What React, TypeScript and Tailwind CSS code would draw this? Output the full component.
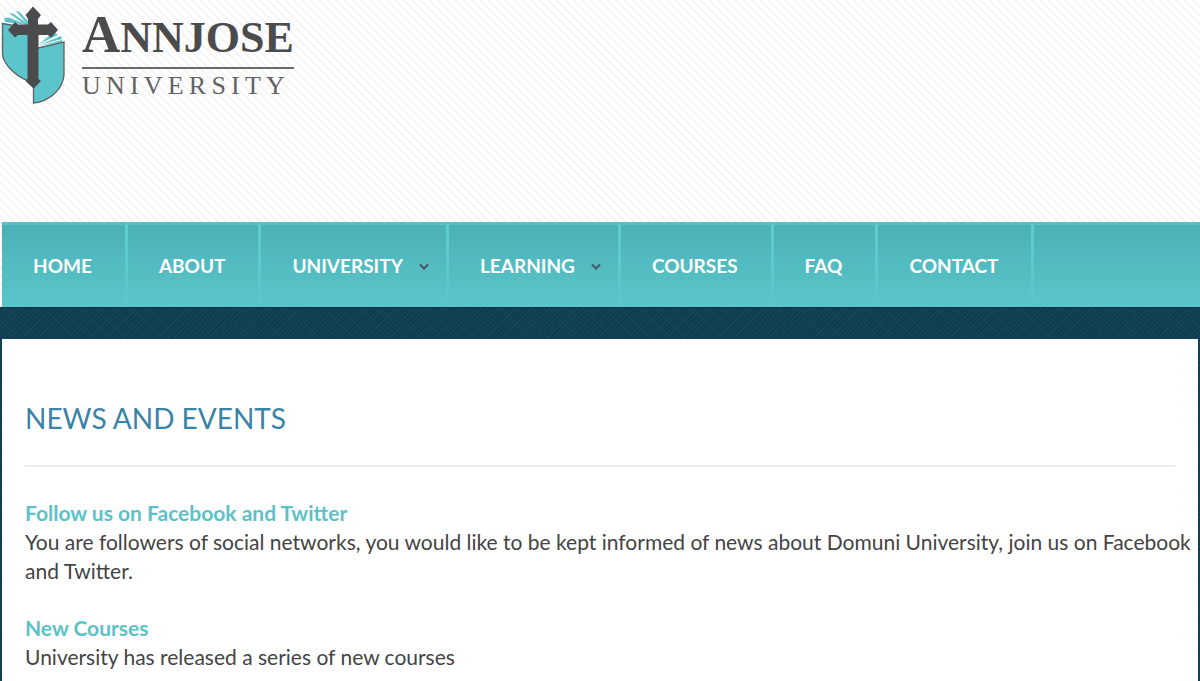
/**
 * News and Events page
 * Logo header, gradient main menu and the list of news items
 */

interface MenuItem {
  label: string;
  hasSubmenu?: boolean;
}

interface NewsItem {
  title: string;
  text: string;
}

const menuItems: MenuItem[] = [
  { label: 'Home' },
  { label: 'About' },
  { label: 'University', hasSubmenu: true },
  { label: 'Learning', hasSubmenu: true },
  { label: 'Courses' },
  { label: 'FAQ' },
  { label: 'Contact' },
];

const newsItems: NewsItem[] = [
  {
    title: 'Follow us on Facebook and Twitter',
    text: 'You are followers of social networks, you would like to be kept informed of news about Domuni University, join us on Facebook and Twitter.',
  },
  {
    title: 'New Courses',
    text: 'University has released a series of new courses',
  },
];

function LogoMark() {
  return (
    <svg width="66" height="106" viewBox="0 0 66 106" aria-hidden="true">
      {/* Loose pages */}
      <g fill="#5bc5cb">
        <path d="M16 11 L19 11.500 L28 21 V25 Z" />
        <path d="M9 13 L13 13.500 L28 24 V27 Z" />
        <path d="M4 18 L9 17.500 L27 25 L5 22 Z" />
        <path d="M39 44 L54 32 L58 35 Z" />
        <path d="M39 45 L61 36 L62 39 Z" />
        <path d="M39 46 L62 40 V42 Z" />
      </g>
      {/* Left and right halves of the shield */}
      <path d="M2.500 23.500 L28 28 V81 C12 74 2.500 62 2.500 53 Z" fill="#5bc5cb" stroke="#5a6265" strokeWidth="1.300" />
      <path d="M33.500 49 L64 42 V75 C63 90 48 102 33.500 103 Z" fill="#5bc5cb" stroke="#5a6265" strokeWidth="1.300" />
      {/* Cross */}
      <path
        d="M33 6.500 L41 15 L38 19 V24.500 H48 L51 22 L58 30 L51 37.500 L48 35 H38.500 V79 L41 81 L33.500 88.500 L25.500 81 L28 78 V35 H18 L15 37.500 L8 30 L15 22 L18 24.500 H28 V19 L25.500 15 Z"
        fill="#4b4b4d"
      />
    </svg>
  );
}

function Logo() {
  return (
    <a href="#" className="inline-flex items-start text-[#4b4b4d]" aria-label="Annjose University">
      <LogoMark />
      <span className="ml-4 flex flex-col pt-2 font-['Liberation_Serif',serif]">
        <span className="border-b-2 border-[#6a6a6c] pb-[3px] text-[44px] font-bold leading-[52px]">
          <span className="text-[53px]">A</span>NNJOSE
        </span>
        <span className="pt-[3px] text-[26px] leading-7 tracking-[0.2em] text-[#636365]">UNIVERSITY</span>
      </span>
    </a>
  );
}

function MainMenu() {
  return (
    <nav className="ml-0.5 border-t-[3px] border-[#57c3c8] bg-linear-to-b from-[#4bb1b7] to-[#5ac6cb]">
      <ul className="flex">
        {menuItems.map((item) => (
          <li key={item.label} className="flex">
            <a
              href="#"
              className="flex h-[82px] items-center pl-[31px] pr-[33px] text-[19px] font-bold uppercase text-white"
            >
              {item.label}
              {item.hasSubmenu && (
                <svg className="-mr-4 ml-4 mt-0.5" width="10" height="8" viewBox="0 0 10 8" aria-hidden="true">
                  <path d="M1 1.500 L5 5.500 L9 1.500" fill="none" stroke="#46565a" strokeWidth="2" />
                </svg>
              )}
            </a>
            <span className="w-[3px] bg-linear-to-b from-[#5ecdd2] to-[#5ac6cb]" />
          </li>
        ))}
      </ul>
    </nav>
  );
}

export default function App() {
  return (
    <div className="flex min-h-screen flex-col bg-[#0f3b50] font-['Lato',sans-serif]">
      {/* Header with diagonal hairlines */}
      <header className="bg-white bg-[repeating-linear-gradient(45deg,#ffffff_0px,#ffffff_3px,#f5f5f5_4px,#f5f5f5_5px,#ffffff_6px)]">
        <div className="h-[222px]">
          <Logo />
        </div>
        <MainMenu />
      </header>

      {/* Woven strip and page panel */}
      <div className="flex grow flex-col border-t border-[#08314a] bg-[#0f3b50] bg-[repeating-linear-gradient(45deg,#1d506360_0px,#1d506360_1px,transparent_1px,transparent_3px),repeating-linear-gradient(135deg,#1d506360_0px,#1d506360_1px,transparent_1px,transparent_4px)] px-0.5 pt-[31px]">
        <main className="grow bg-white px-[23px] pt-[59px]">
          <h1 className="border-b-2 border-[#eeeeee] pb-[27px] text-[28px] leading-10 text-[#3a83a8] uppercase">
            News and Events
          </h1>
          <div className="-mr-4 flex flex-col gap-7 pt-[31px] text-[21px] leading-[29px] text-[#444444]">
            {newsItems.map((item) => (
              <article key={item.title}>
                <h2 className="font-bold text-[#5bc2c8]">{item.title}</h2>
                <p>{item.text}</p>
              </article>
            ))}
          </div>
        </main>
      </div>
    </div>
  );
}
